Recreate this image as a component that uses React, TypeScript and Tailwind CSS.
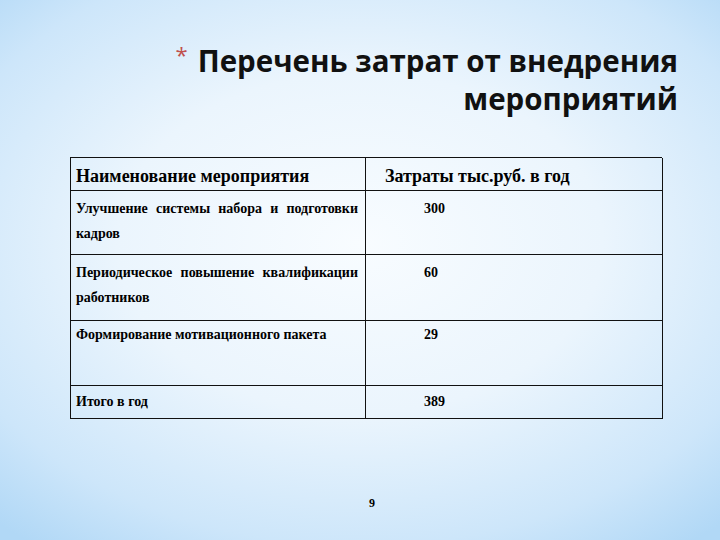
const rows = [
  { name: 'Улучшение системы набора и подготовки кадров', cost: '300', h: 'h-[64px]', pt: 'pt-[5px]' },
  { name: 'Периодическое повышение квалификации работников', cost: '60', h: 'h-[66px]', pt: 'pt-[5px]' },
  { name: 'Формирование мотивационного пакета', cost: '29', h: 'h-[65px]', pt: 'pt-[1px]' },
  { name: 'Итого в год', cost: '389', h: 'h-[33px]', pt: 'pt-[3px]' },
]

export default function App() {
  return (
    <div className="flex h-[540px] w-[720px] flex-col overflow-hidden bg-[radial-gradient(ellipse_75%_70%_at_50%_45%,#f8fcff_0%,#ebf5fd_45%,#cde6fa_80%,#b1d8f6_100%)] font-['Liberation_Serif',serif] text-black">
      {/* Title */}
      <div className="pr-[42px] pt-[43px] text-right font-['Open_Sans',sans-serif] text-[29.5px] font-bold leading-[36px] text-[#111]">
        <div>
          <span className="relative -top-[9px] mr-[10px] text-[22px] font-normal text-[#c0504d]">*</span>
          Перечень затрат от внедрения
        </div>
        <div>мероприятий</div>
      </div>

      {/* Table */}
      <div className="ml-[70px] mt-[40px] grid w-[592px] grid-cols-[295px_297px] border-l border-t border-[#111]">
        <div className="h-[33px] border-b border-r border-[#111] pl-[5px] pt-[8px] text-[18px] font-bold leading-[20px]">
          Наименование мероприятия
        </div>
        <div className="h-[33px] border-b border-r border-[#111] pl-[19px] pt-[8px] text-[18px] font-bold leading-[20px]">
          Затраты тыс.руб. в год
        </div>
        {rows.map((r) => (
          <div key={r.name} className="contents">
            <div
              className={`${r.h} ${r.pt} border-b border-r border-[#111] pl-[5px] pr-[7px] text-justify text-[14px] font-bold leading-[25px] [text-align-last:left]`}
            >
              {r.name}
            </div>
            <div className={`${r.h} ${r.pt} border-b border-r border-[#111] pl-[58px] text-[14px] font-bold leading-[25px]`}>
              {r.cost}
            </div>
          </div>
        ))}
      </div>

      {/* Page number */}
      <div className="mt-[77px] pl-[24px] text-center text-[12px] font-bold leading-[14px]">9</div>
    </div>
  )
}
